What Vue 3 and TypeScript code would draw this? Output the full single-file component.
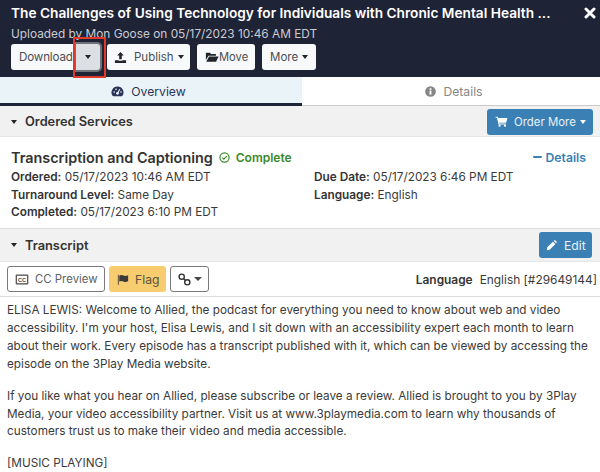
<script setup lang="ts">
const paragraphs: string[][] = [
  [
    "ELISA LEWIS: Welcome to Allied, the podcast for everything you need to know about web and video",
    "accessibility. I'm your host, Elisa Lewis, and I sit down with an accessibility expert each month to learn",
    "about their work. Every episode has a transcript published with it, which can be viewed by accessing the",
    "episode on the 3Play Media website.",
  ],
  [
    "If you like what you hear on Allied, please subscribe or leave a review. Allied is brought to you by 3Play",
    "Media, your video accessibility partner. Visit us at www.3playmedia.com to learn why thousands of",
    "customers trust us to make their video and media accessible.",
  ],
  ["[MUSIC PLAYING]"],
];
</script>

<template>
  <div class="page">
    <header class="head">
      <div class="title-row">
        <h1 class="title">The Challenges of Using Technology for Individuals with Chronic Mental Health ...</h1>
        <svg class="close" viewBox="0 0 12 12" width="12" height="12"><path d="M2 2 L10 10 M10 2 L2 10" stroke="#fff" stroke-width="3" stroke-linecap="round" /></svg>
      </div>
      <div class="sub">Uploaded by Mon Goose on 05/17/2023 10:46 AM EDT</div>
      <div class="actions">
        <div class="split">
          <button class="btn split-main">Download</button>
          <button class="btn split-caret"><span class="caret"></span></button>
        </div>
        <button class="btn publish">
          <svg class="ico" viewBox="0 0 14 14" width="13" height="13"><path d="M7 1 L10.6 4.8 H8.4 V9 H5.6 V4.8 H3.4 Z M1 10 H5 V10.6 H9 V10 H13 V13 H1 Z" fill="#212529" /></svg>
          <span>Publish</span><span class="caret"></span>
        </button>
        <button class="btn move">
          <svg viewBox="0 0 16 13" width="14" height="12"><path d="M1 1.5 H5.5 L7 3 H12.5 V5 H4 L1 10 Z M4.6 6 H15.6 L12.6 12 H1.4 Z" fill="#212529" /></svg>Move
        </button>
        <button class="btn more">More<span class="caret"></span></button>
      </div>
      <span class="highlight"></span>
    </header>

    <nav class="tabs">
      <div class="tab tab-on">
        <svg viewBox="0 0 14 12" width="13" height="11"><path d="M7 0.5 A6.5 6.5 0 0 0 1.6 10.7 Q1.9 11.2 2.5 11.2 H11.5 Q12.1 11.2 12.4 10.7 A6.5 6.5 0 0 0 7 0.5 Z" fill="#2a3358" /><circle cx="7" cy="8" r="1.5" fill="#e9f3f8" /><path d="M7 8 L9.5 3.5" stroke="#e9f3f8" stroke-width="1.2" /><circle cx="3.4" cy="6.5" r="0.9" fill="#e9f3f8" /><circle cx="5.4" cy="3.5" r="0.9" fill="#e9f3f8" /><circle cx="10.8" cy="6.5" r="0.9" fill="#e9f3f8" /></svg>
        <span>Overview</span>
      </div>
      <div class="tab tab-off">
        <svg viewBox="0 0 12 12" width="11" height="11"><circle cx="6" cy="6" r="5.8" fill="#868686" /><rect x="5" y="5" width="2" height="4.4" fill="#fff" /><rect x="5" y="2.4" width="2" height="1.8" fill="#fff" /></svg>
        <span>Details</span>
      </div>
    </nav>

    <section class="bar bar-services">
      <div class="bar-left"><span class="caret dark"></span><strong>Ordered Services</strong></div>
      <button class="btn-blue order">
        <svg viewBox="0 0 15 13" width="13" height="11"><path d="M0.5 1 H3 L3.4 2.4 H14.5 L13 8 H4.8 L5 9 H12.6 V10 H4 L2.2 2 H0.5 Z" fill="#fff" /><circle cx="5.2" cy="11.4" r="1.3" fill="#fff" /><circle cx="11.6" cy="11.4" r="1.3" fill="#fff" /></svg>
        <span class="order-label">Order More</span><span class="caret white"></span>
      </button>
    </section>

    <section class="service">
      <div class="service-head">
        <div class="service-name">
          <span class="service-title">Transcription and Captioning</span>
          <svg class="check" viewBox="0 0 12 12" width="11" height="11"><circle cx="6" cy="6" r="5" fill="none" stroke="#3a8a2a" stroke-width="1.3" /><path d="M3.6 6.1 L5.3 7.8 L8.5 4.5" fill="none" stroke="#3a8a2a" stroke-width="1.3" /></svg>
          <span class="complete">Complete</span>
        </div>
        <a class="details-link"><span class="minus"></span>Details</a>
      </div>
      <div class="meta">
        <div class="col">
          <div><b>Ordered:</b> 05/17/2023 10:46 AM EDT</div>
          <div><b>Turnaround Level:</b> Same Day</div>
          <div><b>Completed:</b> 05/17/2023 6:10 PM EDT</div>
        </div>
        <div class="col">
          <div><b>Due Date:</b> 05/17/2023 6:46 PM EDT</div>
          <div><b>Language:</b> English</div>
        </div>
      </div>
    </section>

    <section class="bar bar-transcript">
      <div class="bar-left"><span class="caret dark"></span><strong>Transcript</strong></div>
      <button class="btn-blue edit">
        <svg viewBox="0 0 12 12" width="11" height="11"><path d="M0.8 11.2 L1.4 8 L7.6 1.8 L10.2 4.4 L4 10.6 Z M8.4 1 L9.2 0.4 Q9.8 0 10.3 0.5 L11.5 1.7 Q12 2.2 11.6 2.8 L11 3.6 Z" fill="#fff" /></svg>
        <span>Edit</span>
      </button>
    </section>

    <div class="tools">
      <div class="tool-left">
        <button class="outline cc">
          <svg viewBox="0 0 15 12" width="14" height="11"><rect x="0.6" y="0.6" width="13.8" height="10.8" rx="1" fill="#555" /><rect x="2" y="2" width="11" height="8" fill="#fff" /><text x="7.5" y="8.2" text-anchor="middle" font-size="6" font-weight="700" font-family="Liberation Sans" fill="#444">CC</text></svg>
          CC Preview
        </button>
        <button class="flag">
          <svg viewBox="0 0 14 12" width="12" height="11"><path d="M1 0.5 H2 V12 H1 Z M2.6 1.5 Q5 0 7.5 1.4 Q10 2.5 13 1 V8 Q10 9.5 7.5 8.2 Q5 7 2.6 8.3 Z" fill="#3a3a3a" /></svg>
          Flag
        </button>
        <button class="outline link">
          <svg viewBox="0 0 14 14" width="13" height="13"><g fill="none" stroke="#333" stroke-width="1.5"><circle cx="4" cy="4" r="2.8" /><circle cx="10" cy="10" r="2.8" /><path d="M6 6 L8 8" /></g></svg>
          <span class="caret mid"></span>
        </button>
      </div>
      <div class="lang"><b>Language</b><span>English [#29649144]</span></div>
    </div>

    <article class="text">
      <p v-for="(lines, i) in paragraphs" :key="i">
        <span v-for="(line, j) in lines" :key="j" class="line">{{ line }}</span>
      </p>
    </article>
  </div>
</template>

<style>
html, body { margin: 0; background: #fff; }
</style>

<style scoped>
.page {
  width: 600px;
  height: 472px;
  overflow: hidden;
  position: relative;
  font-family: Inter, "Liberation Sans", sans-serif;
  font-size: 12.2px;
  color: #3a3a3a;
  background: #fff;
}
button { font-family: inherit; cursor: pointer; white-space: nowrap; }
svg { flex: none; }
.head {
  background: #1f2336;
  height: 77px;
  box-sizing: border-box;
  padding: 3px 0 0 11px;
  position: relative;
}
.title-row { display: flex; align-items: center; justify-content: space-between; padding-right: 4px; height: 20px; }
.title { margin: 0; color: #fff; font-size: 13.7px; font-weight: 600; white-space: nowrap; line-height: 20px; }
.sub { color: #c9cbd2; font-size: 11.85px; line-height: 16px; margin-top: 3px; }
.actions { display: flex; gap: 7px; margin-top: 2px; }
.btn {
  height: 26px;
  padding: 0 8px;
  border: 0;
  border-radius: 3px;
  background: #f8f9fa;
  color: #4a4d52;
  font-size: 11.5px;
  display: inline-flex;
  align-items: center;
  box-sizing: border-box;
}
.split { display: flex; width: 89px; }
.split-main { width: 65px; padding: 0 0 0 8px; border-radius: 3px 0 0 3px; font-size: 11.6px; letter-spacing: -0.15px; }
.split-caret { width: 24px; justify-content: center; padding: 0; background: #dcdfe4; border-radius: 0 3px 3px 0; box-shadow: 0 0 0 2px #6f7278; }
.publish { width: 83px; padding: 0 7px; }
.move { width: 58px; font-size: 11.2px; }
.more { width: 54px; }
.caret { display: inline-block; width: 0; height: 0; border-left: 3.3px solid transparent; border-right: 3.3px solid transparent; border-top: 4px solid #212529; margin-left: 4px; }
.split-caret .caret { margin: 0; }
.caret.dark { margin: 0 8px 0 0; border-left-width: 3.5px; border-right-width: 3.5px; border-top-width: 4.5px; }
.caret.white { border-top-color: #fff; }
.caret.mid { border-left-width: 4px; border-right-width: 4px; border-top-width: 4.5px; border-top-color: #444; margin-left: 3px; }
.ico { margin-right: 7px; }
.highlight {
  position: absolute;
  left: 73px;
  top: 37px;
  width: 33px;
  height: 41px;
  border: 2px solid #e0392b;
  box-sizing: border-box;
  pointer-events: none;
}
.tabs { display: flex; height: 29px; }
.tab { display: flex; align-items: center; justify-content: center; gap: 7px; font-size: 12.2px; box-sizing: border-box; }
.tab-on { width: 302px; background: #e9f3f8; color: #2a3358; border-bottom: 3px solid #1f2336; padding: 2px 5px 0 0; }
.tab-off { width: 298px; color: #868686; border-bottom: 1px solid #ccc; padding-left: 6px; }
.bar {
  background: #f1f1f1;
  display: flex;
  align-items: center;
  justify-content: space-between;
  box-sizing: border-box;
}
.bar-services { height: 31px; padding: 1px 7px 0 11px; border-bottom: 1px solid #e6e6e6; }
.bar-transcript { height: 34px; padding: 0 8px 0 11px; border-top: 1px solid #dcdcdc; border-bottom: 1px solid #e6e6e6; }
.bar-left { display: flex; align-items: center; color: #333; font-size: 12.8px; }
.bar-left strong { font-weight: 600; }
.btn-blue {
  border: 0;
  border-radius: 3px;
  background: #3a80b5;
  color: #e8f1f7;
  font-size: 11.4px;
  height: 26px;
  display: inline-flex;
  align-items: center;
  white-space: nowrap;
  box-sizing: border-box;
}
.order { width: 106px; padding: 0 0 0 8px; }
.order-label { margin-left: 6px; }
.edit { width: 53px; padding: 0 0 0 7px; gap: 7px; font-size: 12.2px; }
.service { height: 91px; box-sizing: border-box; padding: 10px 14px 0 11px; }
.service-head { display: flex; justify-content: space-between; align-items: center; height: 20px; }
.service-name { display: flex; align-items: center; }
.service-title { font-size: 14.4px; font-weight: 600; color: #333; }
.check { margin-left: 6px; }
.complete { margin-left: 6px; color: #3a8a2a; font-weight: 600; font-size: 12px; }
.details-link { color: #3a80b5; font-weight: 600; font-size: 12.2px; display: inline-flex; align-items: center; }
.minus { width: 9px; height: 2.5px; background: #3a80b5; margin-right: 4px; border-radius: 1px; }
.meta { display: flex; font-size: 11.8px; line-height: 17.7px; margin-top: 2px; }
.col { flex: none; width: 303px; }
.col b { font-weight: 600; color: #333; }
.tools {
  height: 35px;
  box-sizing: border-box;
  padding: 0 3px 0 7px;
  display: flex;
  align-items: center;
  justify-content: space-between;
  border-bottom: 1px solid #dcdcdc;
}
.tool-left { display: flex; gap: 4px; }
.outline, .flag {
  height: 26px;
  border-radius: 3px;
  font-size: 12.2px;
  display: inline-flex;
  align-items: center;
  gap: 6px;
  padding: 0 7px;
  box-sizing: border-box;
}
.outline { border: 1px solid #7a7a7a; background: #fff; color: #5f5f5f; }
.flag { border: 0; background: #f7cd6f; color: #5a5240; padding: 0 8px; width: 57px; }
.cc { width: 98px; font-size: 11.4px; }
.link { gap: 0; width: 39px; }
.lang { font-size: 11.9px; display: flex; gap: 7px; }
.lang b { font-weight: 600; color: #333; }
.text { padding: 5px 7px 0 7px; font-size: 11.75px; line-height: 17.9px; color: #3a3a3a; }
.text p { margin: 0 0 14px; }
.line { display: block; white-space: nowrap; }
</style>
